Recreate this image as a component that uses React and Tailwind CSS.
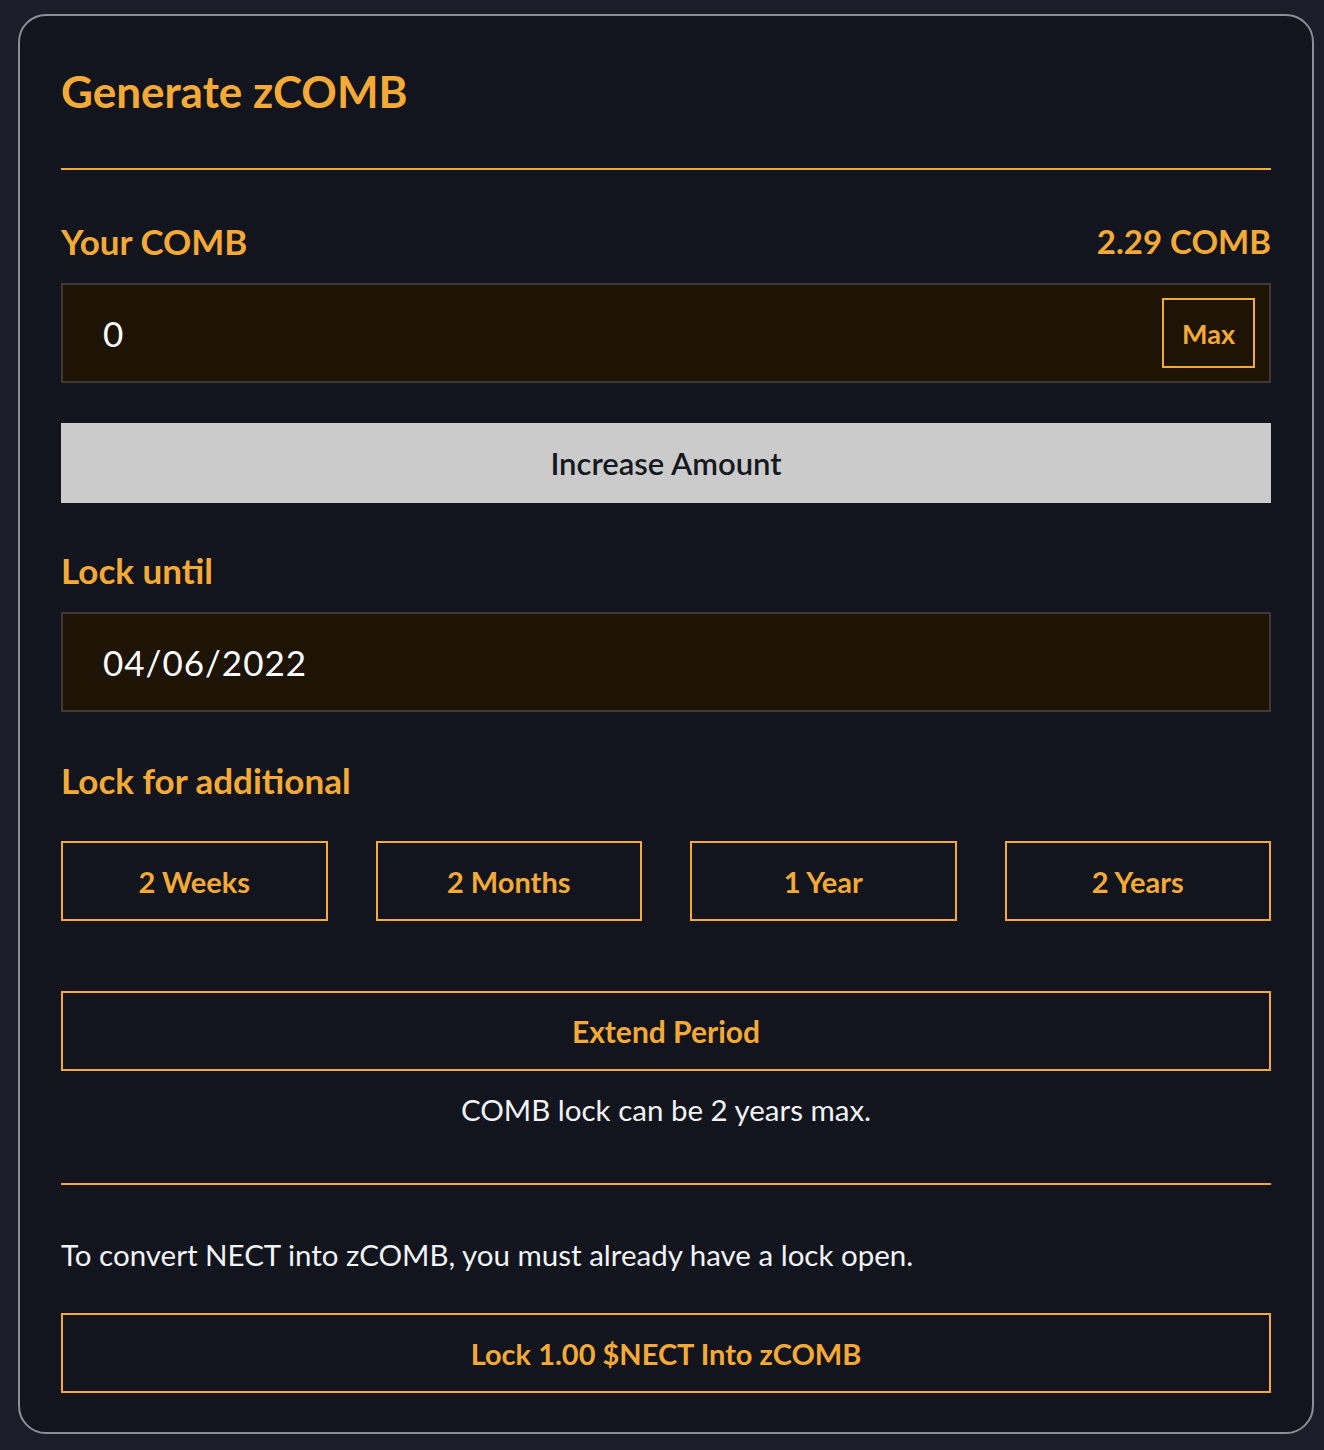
import React from "react";

function Label({ children, right }) {
  return (
    <div className="flex h-[40px] items-center justify-between">
      <span className="text-[35px] font-bold leading-none text-[#f5aa38]">{children}</span>
      {right && <span className="text-[33px] font-bold leading-none text-[#f5aa38]">{right}</span>}
    </div>
  );
}

function OutlineButton({ children, className = "" }) {
  return (
    <button className={`flex h-[80px] w-full items-center justify-center border-2 border-[#f5aa38] bg-transparent text-[29px] font-bold leading-none text-[#f5aa38] ${className}`}>
      {children}
    </button>
  );
}

export default function App() {
  return (
    <div
      className="h-[1450px] w-full bg-[#1b1d28] pt-[14px] pl-[18px]"
      style={{ fontFamily: "Lato, 'Noto Sans', sans-serif" }}
    >
      <div className="flex h-[1420px] w-[1296px] flex-col rounded-[28px] border-2 border-[#8b8e94] bg-[#12151d] px-[41px] pt-[50px] pb-[39px]">
        <div className="flex h-[50px] items-center">
          <h1 className="text-[44px] font-bold leading-none text-[#f5aa38]">Generate zCOMB</h1>
        </div>
        <div className="mt-[52px] h-[2px] bg-[#f5aa38]" />

        <div className="mt-[51px]">
          <Label right="2.29 COMB">Your COMB</Label>
        </div>
        <div className="mt-[22px] flex h-[100px] items-center justify-between border-2 border-[#3e3a33] bg-[#1e1406] pl-[40px] pr-[14px]">
          <span className="text-[35px] leading-none text-white">0</span>
          <button className="flex h-[70px] w-[93px] items-center justify-center border-2 border-[#f5aa38] text-[27px] font-bold leading-none text-[#f5aa38]">
            Max
          </button>
        </div>

        <button className="mt-[40px] flex h-[80px] w-full items-center justify-center bg-[#cbcbcb] text-[31px] font-semibold leading-none text-[#151820]">
          Increase Amount
        </button>

        <div className="mt-[47px]">
          <Label>Lock until</Label>
        </div>
        <div className="mt-[22px] flex h-[100px] items-center border-2 border-[#3e3a33] bg-[#1e1406] pl-[40px]">
          <span className="text-[35px] leading-none tracking-[1px] text-white">04/06/2022</span>
        </div>

        <div className="mt-[48px]">
          <Label>Lock for additional</Label>
        </div>
        <div className="mt-[41px] grid grid-cols-4 gap-[48px]">
          <OutlineButton>2 Weeks</OutlineButton>
          <OutlineButton>2 Months</OutlineButton>
          <OutlineButton>1 Year</OutlineButton>
          <OutlineButton>2 Years</OutlineButton>
        </div>

        <OutlineButton className="mt-[70px] text-[30px]">Extend Period</OutlineButton>

        <div className="mt-[21px] flex h-[36px] items-center justify-center">
          <span className="text-[29.5px] leading-none text-[#f1f3f6]">COMB lock can be 2 years max.</span>
        </div>

        <div className="mt-[55px] h-[2px] bg-[#f5aa38]" />

        <div className="mt-[52px] flex h-[36px] items-center">
          <span className="text-[29.5px] leading-none text-[#f1f3f6]">
            To convert NECT into zCOMB, you must already have a lock open.
          </span>
        </div>

        <OutlineButton className="mt-[40px]">Lock 1.00 $NECT Into zCOMB</OutlineButton>
      </div>
    </div>
  );
}
